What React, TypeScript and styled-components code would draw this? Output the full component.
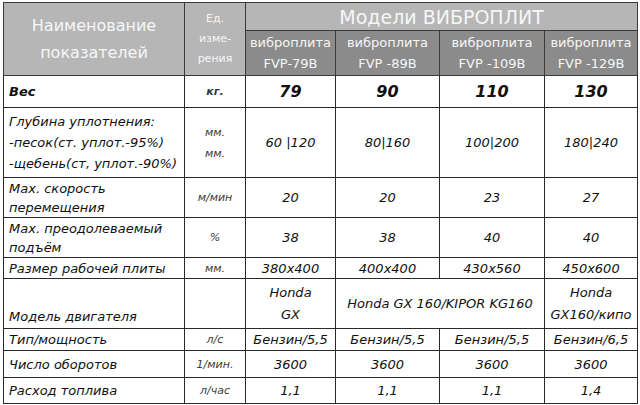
import React from "react";
import styled, { createGlobalStyle } from "styled-components";

const Global = createGlobalStyle`
  html, body { margin: 0; padding: 0; background: #fff; }
  body { width: 640px; height: 405px; overflow: hidden; }
`;

const Page = styled.div`
  padding: 2px 0 0 3px;
`;

const Table = styled.table`
  border-collapse: collapse;
  table-layout: fixed;
  width: 634px;
  font-family: "DejaVu Sans", "Noto Sans", sans-serif;
  color: #111;
`;

const HeadCell = styled.th<{ $dark?: boolean; $size?: number; $lh?: number }>`
  background: ${(p) => (p.$dark ? "#8b8b8b" : "#b6b6b6")};
  color: #f6f6f6;
  font-weight: normal;
  font-size: ${(p) => p.$size ?? 13}px;
  line-height: ${(p) => p.$lh ?? 21}px;
  border: 1px solid #3a3a3a;
  padding: 0;
  text-align: center;
  vertical-align: middle;
  overflow: hidden;
`;

const Row = styled.tr<{ $h: number }>`
  height: ${(p) => p.$h}px;
`;

const Cell = styled.td<{
  $align?: "left" | "center";
  $valign?: "middle" | "bottom";
  $bold?: boolean;
  $size?: number;
  $lh?: number;
}>`
  border: 1px solid #2a2a2a;
  padding: 0;
  padding-left: ${(p) => (p.$align === "left" ? 5 : 0)}px;
  text-align: ${(p) => p.$align ?? "center"};
  vertical-align: ${(p) => p.$valign ?? "middle"};
  font-style: italic;
  font-weight: ${(p) => (p.$bold ? "bold" : "normal")};
  font-size: ${(p) => p.$size ?? 13}px;
  line-height: ${(p) => p.$lh ?? 19}px;
  white-space: nowrap;
  overflow: hidden;
`;

const Unit = styled(Cell)`
  font-size: 11px;
  color: #3a3a3a;
`;

type Line = string | string[];

const rows: {
  h: number;
  lh?: number;
  name: Line;
  unit: Line;
  vals: Line[];
  bold?: boolean;
  merged?: boolean;
  bottom?: boolean;
}[] = [
  { h: 32, name: "Вес", unit: "кг.", vals: ["79", "90", "110", "130"], bold: true },
  {
    h: 70,
    lh: 21,
    name: ["Глубина уплотнения:", "-песок(ст. уплот.-95%)", "-щебень(ст, уплот.-90%)"],
    unit: ["мм.", "мм."],
    vals: ["60 |120", "80|160", "100|200", "180|240"],
  },
  { h: 40, name: ["Мах. скорость", "перемещения"], unit: "м/мин", vals: ["20", "20", "23", "27"] },
  { h: 40, name: ["Мах. преодолеваемый", "подъём"], unit: "%", vals: ["38", "38", "40", "40"] },
  { h: 21, name: "Размер рабочей плиты", unit: "мм.", vals: ["380x400", "400x400", "430x560", "450x600"] },
  {
    h: 50,
    lh: 22,
    name: "Модель двигателя",
    unit: "",
    vals: [["Honda", "GX"], "Honda GX 160/KIPOR KG160", ["Honda", "GX160/кипо"]],
    merged: true,
    bottom: true,
  },
  { h: 22, name: "Тип/мощность", unit: "л/с", vals: ["Бензин/5,5", "Бензин/5,5", "Бензин/5,5", "Бензин/6,5"] },
  { h: 27, name: "Число оборотов", unit: "1/мин.", vals: ["3600", "3600", "3600", "3600"] },
  { h: 26, name: "Расход топлива", unit: "л/час", vals: ["1,1", "1,1", "1,1", "1,4"] },
];

const render = (l: Line) =>
  Array.isArray(l)
    ? l.map((s, i) => (
        <React.Fragment key={i}>
          {i > 0 && <br />}
          {s}
        </React.Fragment>
      ))
    : l;

const models = ["FVP-79B", "FVP -89B", "FVP -109B", "FVP -129B"];

export default function App() {
  return (
    <Page>
      <Global />
      <Table>
        <colgroup>
          <col style={{ width: 181 }} />
          <col style={{ width: 61 }} />
          <col style={{ width: 90 }} />
          <col style={{ width: 104 }} />
          <col style={{ width: 105 }} />
          <col style={{ width: 93 }} />
        </colgroup>
        <thead>
          <Row $h={28}>
            <HeadCell rowSpan={2} $size={16} $lh={27}>
              Наименование
              <br />
              показателей
            </HeadCell>
            <HeadCell rowSpan={2} $size={11} $lh={20}>
              Ед.
              <br />
              изме-
              <br />
              рения
            </HeadCell>
            <HeadCell colSpan={4} $size={19} $lh={26}>
              Модели ВИБРОПЛИТ
            </HeadCell>
          </Row>
          <Row $h={45}>
            {models.map((m) => (
              <HeadCell key={m} $dark>
                виброплита
                <br />
                {m}
              </HeadCell>
            ))}
          </Row>
        </thead>
        <tbody>
          {rows.map((r, i) => (
            <Row key={i} $h={r.h}>
              <Cell
                $align="left"
                $bold={r.bold}
                $lh={r.lh}
                $valign={r.bottom ? "bottom" : "middle"}
              >
                {render(r.name)}
              </Cell>
              <Unit $bold={r.bold} $lh={r.lh}>
                {render(r.unit)}
              </Unit>
              {r.merged ? (
                <>
                  <Cell $lh={r.lh}>{render(r.vals[0])}</Cell>
                  <Cell $lh={r.lh} colSpan={2}>
                    {render(r.vals[1])}
                  </Cell>
                  <Cell $lh={r.lh}>{render(r.vals[2])}</Cell>
                </>
              ) : (
                r.vals.map((v, j) => (
                  <Cell key={j} $bold={r.bold} $lh={r.lh} $size={r.bold ? 16 : 13}>
                    {render(v)}
                  </Cell>
                ))
              )}
            </Row>
          ))}
        </tbody>
      </Table>
    </Page>
  );
}
